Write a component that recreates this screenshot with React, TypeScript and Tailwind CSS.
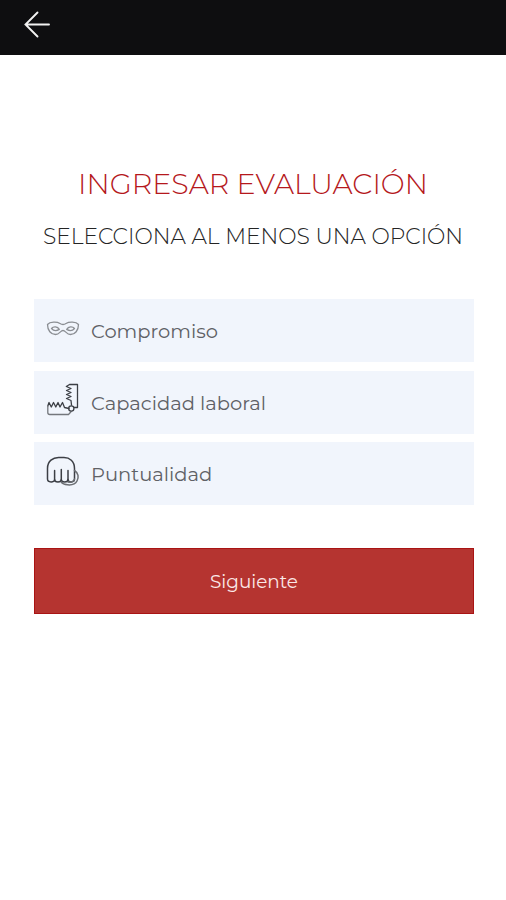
import type { ReactNode } from "react";

function MaskIcon() {
  return (
    <svg width="34" height="34" viewBox="0 0 34 34" fill="none" stroke="#8b8e93" strokeWidth="1.3" strokeLinejoin="round">
      <path d="M1.500 12.500C4 9.600 11 9.600 14 11.500Q17 13.500 20 11.500C23 9.600 30 9.600 32.500 12.500C32.500 18.500 29 22.500 24.500 22.500C20.500 22.500 19.500 18.500 17 18.500C14.500 18.500 13.500 22.500 9.500 22.500C5 22.500 1.500 18.500 1.500 12.500Z" />
      <path d="M5.500 16.500C7.500 14 11.500 14.200 13.300 17.400C10.500 19.100 7.500 18.900 5.500 16.500Z" />
      <path d="M28.500 16.500C26.500 14 22.500 14.200 20.700 17.400C23.500 19.100 26.500 18.900 28.500 16.500Z" />
    </svg>
  );
}

function JawIcon() {
  return (
    <svg width="34" height="34" viewBox="0 0 34 34" fill="none" stroke="#3c3f45" strokeWidth="1.3" strokeLinejoin="round" strokeLinecap="round">
      <path d="M28 24.500H31.500V1.500H23.500L20.300 3.500L25 5.500L20.500 7.500L25 9.500L20.500 11.500L25 13.500L20.500 15.500L25 17.500L25.500 22" />
      <path d="M23 25.500L18.500 24.500L16.500 19.500L14 24L12 19.500L9.800 24L7.500 19.500L5.300 24L3 19.500L1.800 23" />
      <path d="M1.800 23V29.500Q1.800 31.500 3.800 31.500H22.500L25 28.800" stroke="#74777c" />
      <circle cx="25.300" cy="25.500" r="2.600" />
    </svg>
  );
}

function FistIcon() {
  return (
    <svg width="34" height="34" viewBox="0 0 34 34" fill="none" stroke="#3c3f45" strokeWidth="1.500" strokeLinejoin="round" strokeLinecap="round">
      <path d="M1.500 24V13.500C1.500 6 7 2.500 12.500 2.500H18C23.500 2.500 28.500 6 28.500 13.500V24C28.500 27.800 22 27.800 22 24.500C22 27.800 15.300 27.800 15.300 24.500C15.300 27.800 8.600 27.800 8.600 24.500C8.600 27.800 1.500 27.800 1.500 24Z" />
      <path d="M8.600 24.500V15.500M15.300 24.500V14.500M22 24.500V15.500" />
      <path d="M28.500 15.500C32.500 18 33 22.500 31 26C29 29.800 25.500 30.200 21.500 29.800C18.500 29.500 16.300 28.500 15.300 27M28.500 24C28 27 25 27.500 22 27" stroke="#6b6e73" />
    </svg>
  );
}

function Option({ icon, children }: { icon: ReactNode; children: ReactNode }) {
  return (
    <button className="flex h-[63px] w-full items-center bg-[#f1f5fc] pl-3 text-left text-[19.500px] font-[370] text-[#5f6166]">
      <span className="mb-1 shrink-0">{icon}</span>
      <span className="mt-0.5 ml-[11px] whitespace-nowrap">{children}</span>
    </button>
  );
}

export default function App() {
  return (
    <div className="flex h-[900px] w-full flex-col bg-white font-['Montserrat','Inter',sans-serif]">
      <header className="flex h-[55px] shrink-0 items-start bg-[#0e0e10] pt-[11px] pl-6">
        <svg width="27" height="27" viewBox="0 0 27 27" fill="none" stroke="#f2f2f2" strokeWidth="1.900" strokeLinecap="round">
          <path d="M25 13.500H1.500M13.500 1.500L1.500 13.500L13.500 25.500" />
        </svg>
      </header>
      <main className="flex flex-col px-[34px] pt-[109px]">
        <h1 className="flex h-10 items-center justify-center whitespace-nowrap text-[28.500px] font-[350] text-[#b5181c]">
          INGRESAR EVALUACIÓN
        </h1>
        <h2 className="mt-4 flex h-8 items-center justify-center whitespace-nowrap text-[21.800px] font-[350] text-[#242424]">
          SELECCIONA AL MENOS UNA OPCIÓN
        </h2>
        <div className="mt-[47px] flex w-[440px] flex-col gap-[8.700px]">
          <Option icon={<MaskIcon />}>Compromiso</Option>
          <Option icon={<JawIcon />}>Capacidad laboral</Option>
          <Option icon={<FistIcon />}>Puntualidad</Option>
        </div>
        <button className="mt-[42.600px] flex h-[66px] w-[440px] items-center justify-center border border-[#a91414] bg-[#b53430] pt-0.5 text-[18.400px] text-[#fbe9e8]">
          Siguiente
        </button>
      </main>
    </div>
  );
}
